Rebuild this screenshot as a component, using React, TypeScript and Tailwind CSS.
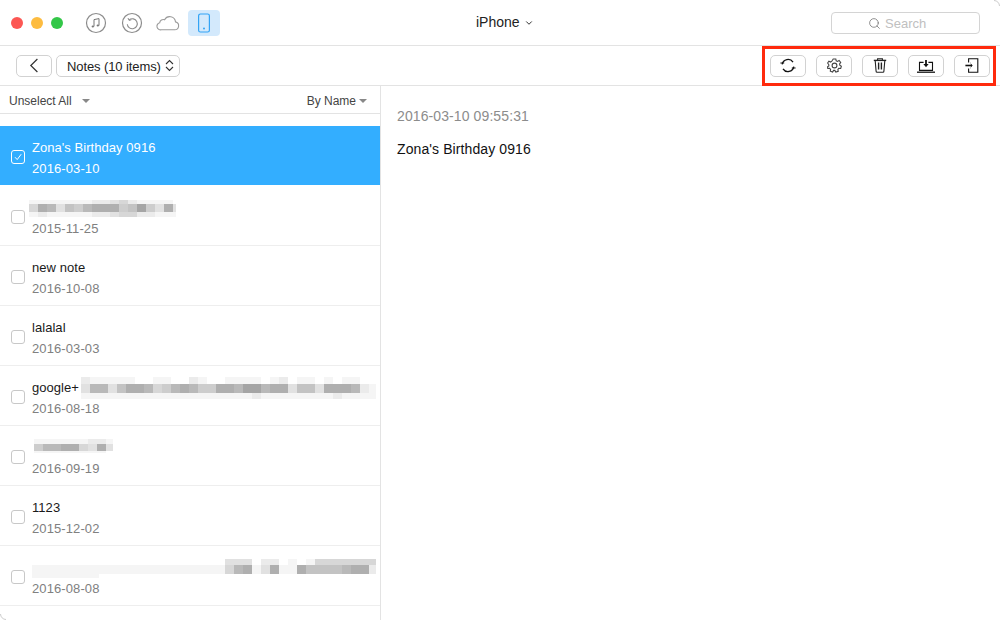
import { ChevronDown, Search } from "lucide-react";

const font = "font-['Liberation_Sans',Arial,sans-serif]";

type Mosaic = { width: number; shift?: number; rows: { h: number; cells: string }[] };

const CELL = 9;

// gray levels of the blurred titles: 0 = white ... 9 = dark, one digit per cell
const level = (c: string) => {
  const n = 255 - Number(c) * 10;
  return `rgb(${n},${n},${n})`;
};

function Blur({ m }: { m: Mosaic }) {
  let y = 0;
  const height = m.rows.reduce((a, r) => a + r.h, 0);
  return (
    <svg width={m.width} height={height} className="block shrink-0" shapeRendering="crispEdges">
      {m.rows.map((r) => {
        const top = y;
        y += r.h;
        return r.cells.split("").map((c, i) => (
          <rect key={`${top}-${i}`} x={i * CELL - (m.shift ?? 0)} y={top} width={CELL} height={r.h} fill={level(c)} />
        ));
      })}
    </svg>
  );
}

const blur2: Mosaic = {
  width: 147,
  rows: [
    { h: 4, cells: "11111112234211110" },
    { h: 8, cells: "48736578885695383" },
    { h: 5, cells: "12111112234422111" },
  ],
};

const blur5: Mosaic = {
  width: 295,
  rows: [
    { h: 7, cells: "211111001100210011110120110101100" },
    { h: 9, cells: "377368874578755887997883663888721" },
    { h: 6, cells: "111111111111111111121111111121111" },
  ],
};

const blur6: Mosaic = {
  width: 79,
  rows: [
    { h: 5, cells: "111111221" },
    { h: 7, cells: "577884383" },
    { h: 2, cells: "111111110" },
  ],
};

const blur8: Mosaic = {
  width: 344,
  shift: 5,
  rows: [
    { h: 6, cells: "0000000000000000000000333022010144444441" },
    { h: 9, cells: "1111111111111111111111478138118666678821" },
    { h: 4, cells: "1111111100000000000000000000000000000000" },
  ],
};

type Note = { title?: string; blur?: Mosaic; blurClass?: string; date: string };

const notes: Note[] = [
  { title: "Zona's Birthday 0916", date: "2016-03-10" },
  { blur: blur2, blurClass: "-ml-[3px]", date: "2015-11-25" },
  { title: "new note", date: "2016-10-08" },
  { title: "lalalal", date: "2016-03-03" },
  { title: "google+", blur: blur5, blurClass: "ml-[2px]", date: "2016-08-18" },
  { blur: blur6, blurClass: "ml-[2px] -translate-y-[2px]", date: "2016-09-19" },
  { title: "1123", date: "2015-12-02" },
  { blur: blur8, date: "2016-08-08" },
];

function Check({ on }: { on?: boolean }) {
  return (
    <span
      className={`mt-[2px] flex h-[14px] w-[14px] shrink-0 items-center justify-center rounded-[3px] border ${
        on ? "border-white" : "border-[#c8c8c8] bg-white"
      }`}
    >
      {on && (
        <svg width="10" height="10" viewBox="0 0 10 10" fill="none" stroke="#fff" strokeWidth="1">
          <path d="M2 5.2 4.2 7.6 8.2 2.2" />
        </svg>
      )}
    </span>
  );
}

function NoteRow({ note, active }: { note: Note; active?: boolean }) {
  return (
    <div
      className={`flex h-[60px] items-center pl-[11px] ${
        active ? "bg-[#33aeff] bg-clip-padding border-b border-white" : "border-b border-[#eeeeee] bg-white"
      }`}
    >
      <Check on={active} />
      <div className="ml-[7px] min-w-0 flex-1 self-start pt-3">
        <div
          className={`flex h-5 items-center text-[13px] leading-5 tracking-[0.05px] ${
            active ? "text-white" : "text-[#1a1a1a]"
          }`}
        >
          {note.title && <span>{note.title}</span>}
          {note.blur && (
            <span className={note.blurClass}>
              <Blur m={note.blur} />
            </span>
          )}
        </div>
        <div className={`mt-px text-[13px] leading-5 tracking-[0.1px] ${active ? "text-white" : "text-[#808080]"}`}>
          {note.date}
        </div>
      </div>
    </div>
  );
}

function ToolButton({ children }: { children: React.ReactNode }) {
  return (
    <button className="flex h-[22px] w-9 items-center justify-center rounded-[5px] border border-[#d2d2d2] bg-white">
      {children}
    </button>
  );
}

export default function App() {
  return (
    <div className={`${font} relative h-[620px] w-[1000px] overflow-hidden bg-white text-[#333]`}>
      {/* Title bar */}
      <div className="flex h-[46px] items-center border-b border-[#e3e3e3] bg-white">
        <div className="flex w-[476px] items-center">
          <div className="ml-[11px] flex gap-2">
            <span className="h-3 w-3 rounded-full bg-[#fc5753]" />
            <span className="h-3 w-3 rounded-full bg-[#fdbc40]" />
            <span className="h-3 w-3 rounded-full bg-[#33c748]" />
          </div>
          <svg width="22" height="22" viewBox="0 0 22 22" fill="none" stroke="#8c8c8c" className="ml-[22px]">
            <circle cx="11" cy="11" r="9.5" strokeWidth="1.2" />
            <path d="M9 14.4V7.6l5-1v7" stroke="#777" strokeWidth="1" />
            <ellipse cx="7.8" cy="14.6" rx="1.2" ry="1" fill="#777" stroke="none" />
            <ellipse cx="12.8" cy="13.6" rx="1.2" ry="1" fill="#777" stroke="none" />
          </svg>
          <svg width="22" height="22" viewBox="0 0 22 22" fill="none" stroke="#8c8c8c" className="ml-[14px]">
            <circle cx="11" cy="11" r="9.5" strokeWidth="1.2" />
            <path d="M8.2 7.8a5 5 0 1 1-1.9 4.4" strokeWidth="1.1" />
            <path d="M7 6 8 8.4l2.4-.6" strokeWidth="1" />
          </svg>
          <svg width="24" height="16" viewBox="0 0 24 16" fill="none" stroke="#9a9a9a" strokeWidth="1.1" className="ml-[13px]">
            <path d="M5.5 14.8h13.2a4 4 0 0 0 .8-7.9 5.8 5.8 0 0 0-10.9-2.2 3.6 3.6 0 0 0-4.9 3A3.6 3.6 0 0 0 5.5 14.8Z" />
          </svg>
          <span className="ml-[8px] flex h-[26px] w-8 items-center justify-center rounded-[4px] bg-[#d3e9fc]">
            <svg width="14" height="20" viewBox="0 0 14 20" fill="none">
              <rect x="1.6" y="1" width="10.8" height="18" rx="1.8" stroke="#33a4f5" strokeWidth="1.2" />
              <circle cx="7" cy="15.6" r="1" fill="#33a4f5" />
            </svg>
          </span>
        </div>
        <span className="-translate-y-px text-sm text-[#222]">iPhone</span>
        <ChevronDown size={10} strokeWidth={2.4} className="ml-[4px] text-[#333]" />
        <div className="ml-auto mr-5 flex h-[22px] w-[149px] items-center rounded-[4px] border border-[#d4d4d4] pl-[36px] pt-[2px] text-[13px] text-[#c0c0c0]">
          <Search size={13} strokeWidth={1.5} className="mr-[4px] text-[#777]" />
          Search
        </div>
      </div>

      {/* Toolbar */}
      <div className="flex h-10 items-center border-b border-[#e3e3e3] pl-4 pr-[10px]">
        <button className="flex h-[22px] w-9 items-center justify-center rounded-[5px] border border-[#d2d2d2]">
          <svg width="10" height="15" viewBox="0 0 10 15" fill="none" stroke="#333" strokeWidth="1.2">
            <path d="M8.4 1 1.8 7.5l6.6 6.5" />
          </svg>
        </button>
        <button className="ml-1 flex h-[22px] w-[124px] items-center rounded-[5px] border border-[#d2d2d2] pl-[10px] pt-[2px] text-[13px] tracking-[-0.1px] text-[#222]">
          Notes (10 items)
          <svg width="9" height="13" viewBox="0 0 9 13" fill="none" stroke="#333" strokeWidth="1.1" className="-mt-[2px] ml-[4px]">
            <path d="M1 5 4.5 1.5 8 5M1 8l3.5 3.5L8 8" />
          </svg>
        </button>
        <div className="ml-auto flex gap-[10px]">
          <ToolButton>
            <svg width="16" height="15" viewBox="0 0 16 15" fill="none" stroke="#111" strokeWidth="1.3">
              <path d="M2.2 6.4A5.9 5.9 0 0 1 13 4.2M13.8 8.6A5.9 5.9 0 0 1 3 10.8" />
              <path d="M.4 5h3.8M11.8 10h3.8" strokeWidth="1.2" />
            </svg>
          </ToolButton>
          <ToolButton>
            <svg width="15" height="15" viewBox="0 0 15 15" fill="none" stroke="#444" strokeWidth="1.1">
              <path d="M6.2 1h2.6l.4 1.8 1.3.6 1.6-.9 1.6 1.9-1.1 1.5.2 1.3 1.6 1-.7 2.3-1.9-.1-.9 1.1.3 1.9-2.4.6-1-1.6H6.6l-1 1.6-2.3-.8.3-1.8-1-1.1-1.8.1L.2 9l1.6-1v-1.4L.6 5l1.3-1.8 1.7.8 1.2-.8Z" />
              <circle cx="7.5" cy="7.5" r="2.4" />
            </svg>
          </ToolButton>
          <ToolButton>
            <svg width="14" height="15" viewBox="0 0 14 15" fill="none" stroke="#222" strokeWidth="1.1">
              <path d="M.8 2.4h12.4" strokeWidth="1.4" />
              <path d="M4.6 2V.8h4.8V2M2.2 2.8l.9 10.4c0 .6.5 1 1 1h5.8c.5 0 1-.4 1-1l.9-10.4" />
              <path d="M5.6 4.6v6.8M8.4 4.6v6.8" strokeWidth="1.4" />
            </svg>
          </ToolButton>
          <ToolButton>
            <svg width="18" height="14" viewBox="0 0 18 14" fill="none" stroke="#111" strokeWidth="1.1">
              <path d="M6.6 3.4H2.5v8h13v-8h-4.1" />
              <path d="M0 13.2h18" strokeWidth="1.3" />
              <path d="M9 1v5" strokeWidth="1.8" />
              <path d="M6.4 5h5.2L9 8.2Z" fill="#111" stroke="none" />
            </svg>
          </ToolButton>
          <ToolButton>
            <svg width="14" height="15" viewBox="0 0 14 15" fill="none" stroke="#111" strokeWidth="1.1">
              <path d="M3.6 4.6V.8h9.2v13.4H3.6v-3.8" />
              <path d="M.4 7.5h6" strokeWidth="1.6" />
              <path d="M5 4.8h.8v5.4H5l2.7-2.7Z" fill="#111" stroke="none" />
            </svg>
          </ToolButton>
        </div>
      </div>

      {/* Main */}
      <div className="flex h-[534px]">
        <div className="w-[381px] shrink-0 border-r border-[#e3e3e3]">
          <div className="flex h-7 items-center border-b border-[#e3e3e3] pl-[9px] pr-[13px] pt-[3px] text-xs text-[#444]">
            <span>Unselect All</span>
            <span className="ml-[10px] h-0 w-0 border-x-[4px] border-t-[4px] border-x-transparent border-t-[#888]" />
            <span className="ml-auto">By Name</span>
            <span className="ml-[3px] h-0 w-0 border-x-[4px] border-t-[4px] border-x-transparent border-t-[#888]" />
          </div>
          <div className="h-3" />
          {notes.map((n, i) => (
            <NoteRow key={n.date} note={n} active={i === 0} />
          ))}
        </div>
        <div className="flex-1 pl-4 pt-5">
          <div className="text-sm leading-5 tracking-[0.1px] text-[#8c8c8c]">2016-03-10 09:55:31</div>
          <div className="mt-[13px] text-sm leading-5 tracking-[0.1px] text-[#111]">Zona's Birthday 0916</div>
        </div>
      </div>

      {/* Red highlight over the toolbar actions */}
      <div className="pointer-events-none absolute left-[762px] top-[46px] h-[40px] w-[234px] border-[3px] border-[#ff2a0d]" />

      {/* Window corners */}
      <svg width="6" height="6" className="absolute right-0 top-0" fill="none" stroke="#cccccc">
        <path d="M0 .5C3 .5 5.5 3 5.5 6" />
      </svg>
      <svg width="6" height="6" className="absolute bottom-0 left-0" fill="none" stroke="#cccccc">
        <path d="M.5 0C.5 3 3 5.5 6 5.5" />
      </svg>
    </div>
  );
}
